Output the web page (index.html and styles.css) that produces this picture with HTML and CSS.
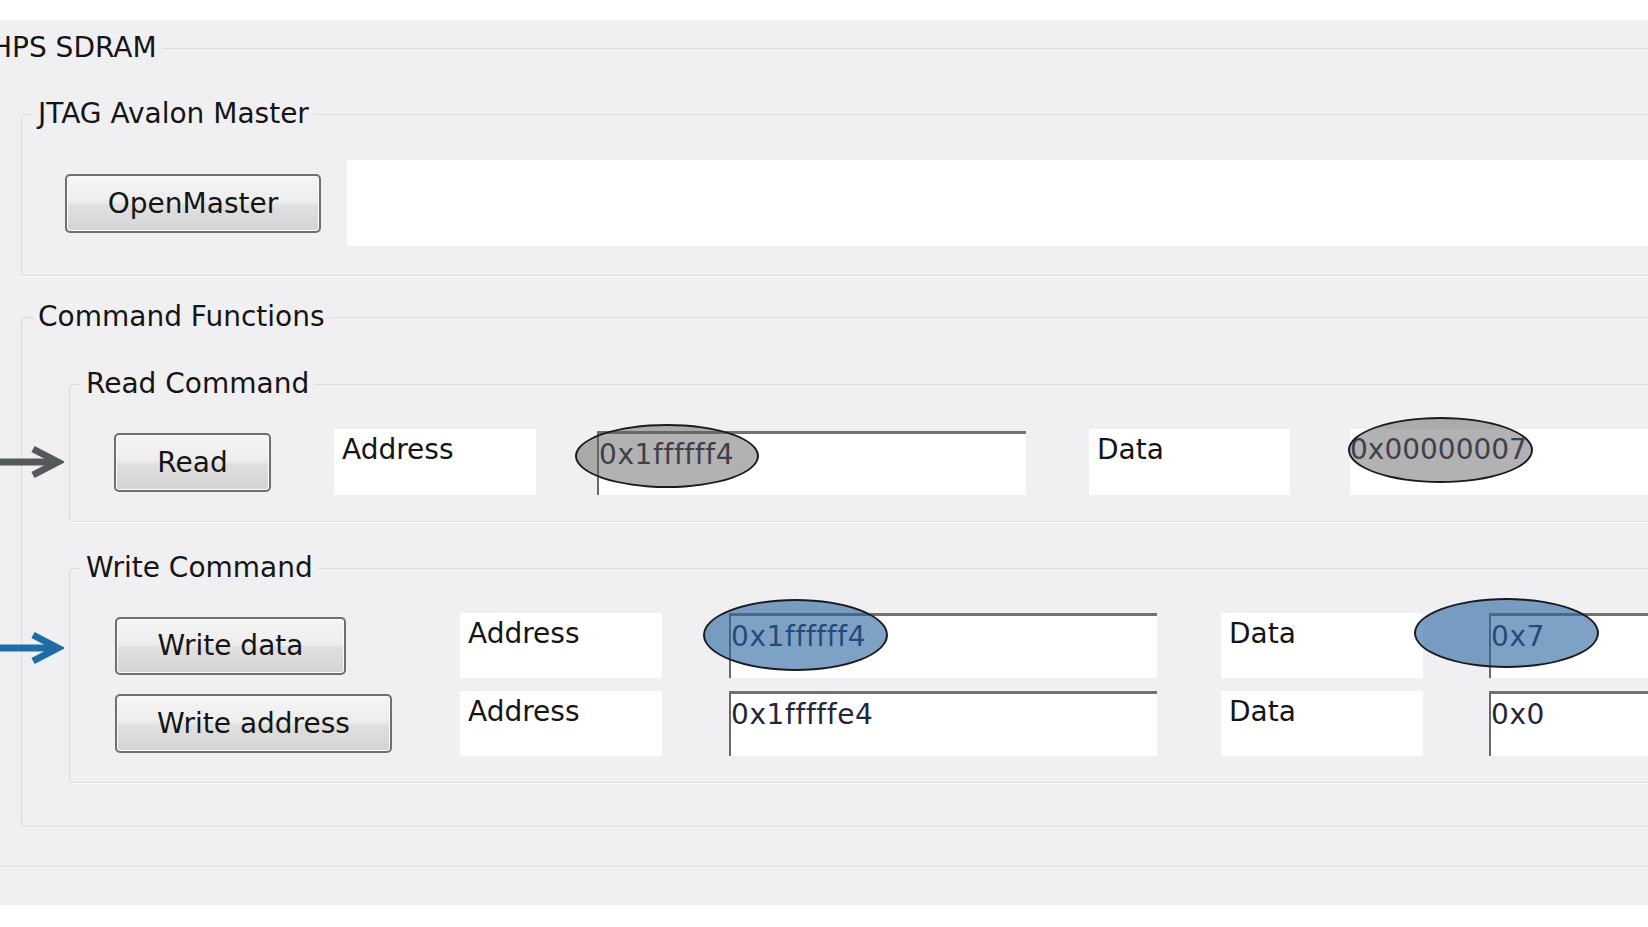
FILE: index.html
```html
<!DOCTYPE html>
<html>
<head>
<meta charset="utf-8">
<title>HPS SDRAM</title>
<link rel="stylesheet" href="styles.css">
</head>
<body>
<div class="screen">
  <fieldset class="group outer">
    <legend class="title title-outer">HPS SDRAM</legend>

    <fieldset class="group jtag">
      <legend class="title title-l1">JTAG Avalon Master</legend>
      <div class="jtag-row">
        <button class="btn btn-open">OpenMaster</button>
        <div class="status-field"></div>
      </div>
    </fieldset>

    <fieldset class="group cmd">
      <legend class="title title-l1">Command Functions</legend>

      <fieldset class="group sub read">
        <legend class="title title-l2">Read Command</legend>
        <svg class="arrow arrow-read" width="64" height="34" viewBox="0 0 64 34">
          <line x1="0" y1="17" x2="56" y2="17" stroke="#55595c" stroke-width="7"/>
          <polyline points="33,4 58,17 33,30" fill="none" stroke="#55595c" stroke-width="7" stroke-linejoin="miter"/>
        </svg>
        <div class="read-row">
          <button class="btn btn-read">Read</button>
          <div class="label label-r1">Address</div>
          <div class="textbox sunken tb-r-addr">0x1ffffff4<span class="mark mark-gray mark-r1"></span></div>
          <div class="label label-r2">Data</div>
          <div class="textbox plain tb-r-data">0x00000007<span class="mark mark-gray mark-r2"></span></div>
        </div>
      </fieldset>

      <fieldset class="group sub write">
        <legend class="title title-l2">Write Command</legend>
        <svg class="arrow arrow-write" width="64" height="34" viewBox="0 0 64 34">
          <line x1="0" y1="17" x2="56" y2="17" stroke="#1f6ca6" stroke-width="7"/>
          <polyline points="33,4 58,17 33,30" fill="none" stroke="#1f6ca6" stroke-width="7" stroke-linejoin="miter"/>
        </svg>
        <div class="write-grid">
          <div class="cell"><button class="btn btn-wdata">Write data</button></div>
          <div class="label">Address</div>
          <div class="textbox sunken tb-w-addr">0x1ffffff4<span class="mark mark-blue mark-w1"></span></div>
          <div class="label">Data</div>
          <div class="textbox sunken tb-w-data">0x7<span class="mark mark-blue mark-w2"></span></div>

          <div class="cell"><button class="btn btn-waddr">Write address</button></div>
          <div class="label">Address</div>
          <div class="textbox sunken tb-w-addr">0x1fffffe4</div>
          <div class="label">Data</div>
          <div class="textbox sunken tb-w-data">0x0</div>
        </div>
      </fieldset>
    </fieldset>
  </fieldset>
</div>
</body>
</html>
```

FILE: styles.css
```css
html, body {
  margin: 0;
  padding: 0;
  background: #ffffff;
}

body {
  font-family: "DejaVu Sans", "Liberation Sans", sans-serif;
  font-size: 28px;
  color: #151515;
  overflow: hidden;
}

.screen {
  margin-top: 20px;
  height: 885px;
  background: #f0f0f2;
  overflow: hidden;
}

.group {
  margin: 0;
  min-inline-size: 0;
  border: 1px solid #d6dbdf;
  border-radius: 4px;
  box-shadow: 1px 1px 0 #fbfcfd;
  position: relative;
}

.title {
  padding: 0 5px;
  height: 30px;
  line-height: 30px;
  font-size: 28px;
  color: #151515;
}

.outer {
  margin-top: 13px;
  margin-left: -14px;
  width: 1800px;
  padding: 36px 0 39px 34px;
}

.title-outer {
  margin-left: -35px;
}

.title-l1 {
  margin-left: 11px;
}

.title-l2 {
  margin-left: 11px;
}

/* JTAG */
.jtag {
  padding: 31px 0 29px 0;
}

.jtag-row {
  display: flex;
  align-items: center;
  height: 86px;
  padding-left: 43px;
}

.status-field {
  flex: 1;
  height: 86px;
  margin-left: 26px;
  background: #ffffff;
}

/* Command functions */
.cmd {
  margin-top: 26px;
  padding: 37px 0 43px 0;
}

.sub {
  margin-left: 47px;
  padding: 30px 0 26px 0;
}

.write {
  margin-top: 31px;
}

/* Buttons */
.btn {
  font-family: "DejaVu Sans", "Liberation Sans", sans-serif;
  font-size: 28px;
  color: #151515;
  padding: 0;
  height: 59px;
  border: 2px solid #6f6f6f;
  border-radius: 5px;
  background: linear-gradient(#f5f5f5 0%, #ededed 47%, #e0e0e0 53%, #d3d3d3 100%);
  box-shadow: inset 0 0 0 1px #fbfbfb;
  text-align: center;
}

.btn-open { width: 256px; }
.btn-read { width: 157px; }
.btn-wdata { width: 231px; height: 58px; }
.btn-waddr { width: 277px; height: 59px; }

/* Read row */
.read-row {
  display: flex;
  align-items: center;
  height: 66px;
  padding-left: 44px;
}

.label {
  background: #ffffff;
  height: 66px;
  box-sizing: border-box;
  padding: 4px 8px;
  line-height: 34px;
}

.label-r1 { width: 202px; margin-left: 63px; }
.label-r2 { width: 201px; margin-left: 63px; }

.textbox {
  position: relative;
  background: #ffffff;
  box-sizing: border-box;
  line-height: 34px;
  letter-spacing: 0.6px;
  color: #25253c;
  white-space: nowrap;
}

.sunken {
  border-top: 3px solid #727272;
  border-left: 2px solid #6a6a6a;
  height: 64px;
  padding-top: 4px;
  align-self: flex-end;
}

.plain {
  height: 66px;
  padding-top: 4px;
  letter-spacing: 0;
}

.tb-r-addr { width: 429px; margin-left: 61px; }
.tb-r-data { flex: 1; margin-left: 60px; }

/* Write grid */
.write-grid {
  display: grid;
  grid-template-columns: 345px 269px 492px 268px 400px;
  grid-auto-rows: 65px;
  row-gap: 13px;
  padding-left: 45px;
}

.write-grid .cell {
  display: flex;
  align-items: center;
}

.write-grid .label {
  width: 202px;
  height: 65px;
}

.write-grid .textbox {
  height: 65px;
  border-top-width: 3px;
}

.tb-w-addr { width: 428px; }
.tb-w-data { width: 400px; }

/* Annotation marks */
.mark {
  position: absolute;
  border: 2px solid #1b1b1b;
  border-radius: 50%;
  box-sizing: border-box;
}

.mark-gray {
  background: rgba(95, 95, 95, 0.48);
}

.mark-blue {
  background: rgba(40, 100, 160, 0.6);
}

.mark-r1 { left: -24px; top: -10px; width: 184px; height: 64px; }
.mark-r2 { left: -2px; top: -12px; width: 185px; height: 66px; }
.mark-w1 { left: -28px; top: -17px; width: 185px; height: 72px; }
.mark-w2 { left: -77px; top: -18px; width: 185px; height: 70px; }

/* Arrows */
.arrow {
  position: absolute;
  left: -70px;
}

.arrow-read { top: 46px; }
.arrow-write { top: 48px; }
```
